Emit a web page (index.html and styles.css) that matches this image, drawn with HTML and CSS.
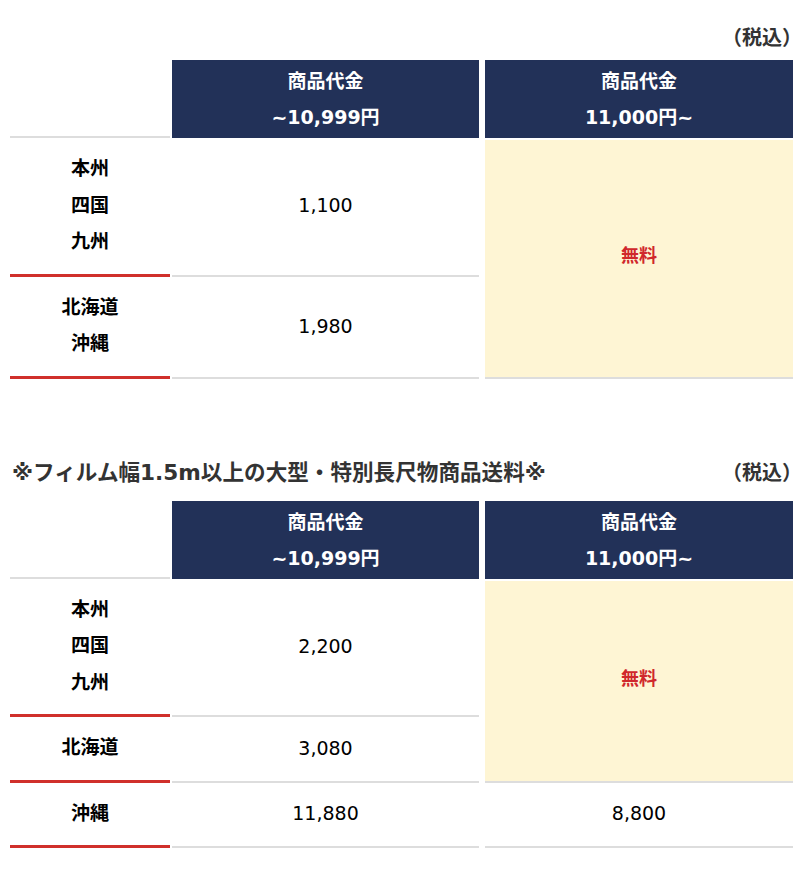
FILE: index.html
```html
<!DOCTYPE html>
<html lang="ja">
<head>
<meta charset="utf-8">
<link rel="stylesheet" href="styles.css">
</head>
<body>
<div class="wrap">
  <div class="caption caption-first">
    <span class="tax">（税込）</span>
  </div>
  <div class="table">
    <div class="hd-blank"></div>
    <div class="hd hd2">商品代金<br>~10,999円</div>
    <div class="hd hd3">商品代金<br>11,000円~</div>

    <div class="lbl">本州<br>四国<br>九州</div>
    <div class="val">1,100</div>
    <div class="free span2">無料</div>

    <div class="lbl">北海道<br>沖縄</div>
    <div class="val">1,980</div>
  </div>

  <div class="caption caption-second">
    <span class="title">※フィルム幅1.5m以上の大型・特別長尺物商品送料※</span>
    <span class="tax">（税込）</span>
  </div>
  <div class="table">
    <div class="hd-blank"></div>
    <div class="hd hd2">商品代金<br>~10,999円</div>
    <div class="hd hd3">商品代金<br>11,000円~</div>

    <div class="lbl">本州<br>四国<br>九州</div>
    <div class="val">2,200</div>
    <div class="free span2">無料</div>

    <div class="lbl">北海道</div>
    <div class="val">3,080</div>

    <div class="lbl">沖縄</div>
    <div class="val">11,880</div>
    <div class="val val3">8,800</div>
  </div>
</div>
</body>
</html>
```

FILE: styles.css
```css
* { box-sizing: border-box; }
body {
  margin: 0;
  background: #fff;
  font-family: "DejaVu Sans", "Noto Sans CJK JP", sans-serif;
  color: #000;
}
.wrap {
  width: 804px;
  padding: 24px 11px 0 10px;
}
.caption {
  display: flex;
  justify-content: flex-end;
  align-items: baseline;
  line-height: 28px;
  margin-bottom: 8px;
}
.caption-second {
  justify-content: space-between;
  margin-top: 80px;
  margin-bottom: 14px;
}
.tax {
  font-size: 20px;
  font-weight: 700;
  color: #333;
  margin-right: -9px;
}
.title {
  font-size: 21.6px;
  font-weight: 700;
  color: #333;
  padding-left: 2px;
}
.table {
  display: grid;
  grid-template-columns: 160px 310px 313px;
  row-gap: 2px;
}
.hd-blank {
  border-bottom: 2px solid #dddddd;
}
.hd {
  background: #223158;
  color: #fff;
  font-weight: 700;
  font-size: 19px;
  line-height: 36px;
  padding: 3px 0 3px;
  text-align: center;
}
.hd2 { margin-left: 2px; margin-right: 1px; }
.hd3 { margin-left: 5px; }
.lbl {
  font-weight: 700;
  font-size: 19px;
  line-height: 36.5px;
  padding: 10px 0 14px;
  text-align: center;
  border-bottom: 3px solid #d0302b;
}
.val {
  margin-left: 2px;
  margin-right: 1px;
  border-bottom: 2px solid #dddddd;
  display: flex;
  align-items: center;
  justify-content: center;
  padding-bottom: 4px;
  font-size: 19px;
  color: #000;
}
.val3 {
  margin-left: 5px;
  margin-right: 0;
}
.free {
  margin-left: 5px;
  background: #fef5d4;
  border-bottom: 2px solid #dddddd;
  display: flex;
  align-items: center;
  justify-content: center;
  padding-bottom: 8px;
  color: #d0282c;
  font-weight: 700;
  font-size: 18px;
}
.span2 {
  grid-column: 3;
  grid-row: span 2;
}
```
